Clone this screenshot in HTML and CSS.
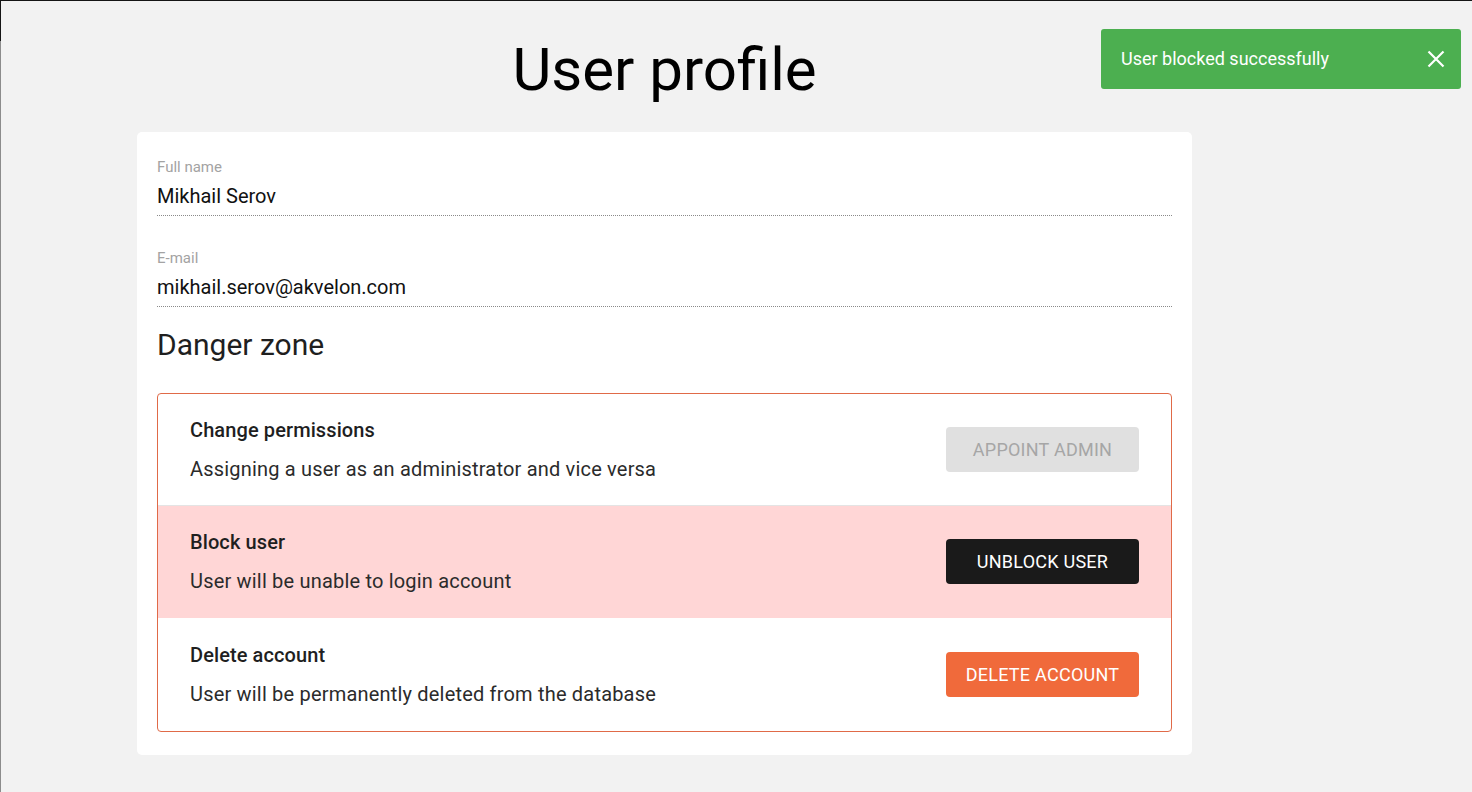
FILE: index.html
```html
<!DOCTYPE html>
<html lang="en">
<head>
<meta charset="utf-8">
<title>User profile</title>
<link rel="stylesheet" href="styles.css">
</head>
<body>
<div class="frame-top"></div>
<div class="frame-left"></div>

<main class="page">
  <h1 class="page-title">User profile</h1>

  <section class="card">
    <div class="field">
      <div class="field-label">Full name</div>
      <div class="field-value">Mikhail Serov</div>
    </div>
    <div class="field">
      <div class="field-label">E-mail</div>
      <div class="field-value">mikhail.serov@akvelon.com</div>
    </div>

    <h2 class="section-title">Danger zone</h2>

    <div class="danger-box">
      <div class="danger-row">
        <div class="danger-text">
          <div class="danger-title">Change permissions</div>
          <div class="danger-desc">Assigning a user as an administrator and vice versa</div>
        </div>
        <button class="btn btn-disabled" type="button">Appoint admin</button>
      </div>
      <div class="danger-row danger-row-active">
        <div class="danger-text">
          <div class="danger-title">Block user</div>
          <div class="danger-desc">User will be unable to login account</div>
        </div>
        <button class="btn btn-dark" type="button">Unblock user</button>
      </div>
      <div class="danger-row">
        <div class="danger-text">
          <div class="danger-title">Delete account</div>
          <div class="danger-desc">User will be permanently deleted from the database</div>
        </div>
        <button class="btn btn-danger" type="button">Delete account</button>
      </div>
    </div>
  </section>
</main>

<div class="toast">
  <span class="toast-text">User blocked successfully</span>
  <svg class="toast-close" width="18" height="18" viewBox="0 0 18 18" aria-hidden="true">
    <path d="M1.5 1.5 L16.5 16.5 M16.5 1.5 L1.5 16.5" stroke="#ffffff" stroke-width="2.2" fill="none"/>
  </svg>
</div>
</body>
</html>
```

FILE: styles.css
```css
html, body {
  margin: 0;
  padding: 0;
}

body {
  background: #f2f2f2;
  font-family: Roboto, "Liberation Sans", Arial, sans-serif;
  color: #1a1a1a;
  min-height: 792px;
}

.frame-top {
  position: fixed;
  left: 0;
  top: 0;
  width: 100%;
  height: 1px;
  background: #151515;
}

.frame-left {
  position: fixed;
  left: 0;
  top: 0;
  width: 1px;
  height: 100%;
  background: linear-gradient(to bottom, #151515 0, #151515 41px, #8c8c8c 41px, #8c8c8c 100%);
}

.page {
  width: 1055px;
  margin-left: 137px;
  padding-top: 34px;
}

.page-title {
  margin: 0 0 26px;
  font-size: 60px;
  line-height: 72px;
  font-weight: 400;
  text-align: center;
  color: #000;
}

.card {
  background: #ffffff;
  border-radius: 5px;
  padding: 26px 20px 23px;
}

.field {
  margin-bottom: 33px;
}

.field-label {
  font-size: 15px;
  line-height: 18px;
  color: #a3a3a3;
}

.field-value {
  margin-top: 8px;
  font-size: 20px;
  line-height: 24px;
  color: #111;
  padding-bottom: 7px;
  border-bottom: 1px dotted #8a8a8a;
}

.section-title {
  margin: -13px 0 30px;
  font-size: 30px;
  line-height: 36px;
  font-weight: 400;
  color: #1f1f1f;
}

.danger-box {
  border: 1px solid #e06a48;
  border-radius: 4px;
  overflow: hidden;
}

.danger-row {
  display: flex;
  align-items: center;
  justify-content: space-between;
  padding: 24px 32px 25px 32px;
  border-top: 1px solid #e4e4e4;
}

.danger-row:first-child {
  border-top: none;
  padding-bottom: 24px;
}

.danger-row-active {
  background: #ffd6d6;
}

.danger-row-active + .danger-row {
  border-top-color: #ffffff;
}

.danger-title {
  font-size: 20px;
  line-height: 24px;
  font-weight: 500;
  letter-spacing: 0.1px;
  color: #1f1f1f;
  margin-bottom: 15px;
}

.danger-desc {
  font-size: 20px;
  line-height: 24px;
  letter-spacing: 0.19px;
  color: #2b2b2b;
}

.btn {
  width: 193px;
  height: 45px;
  border: none;
  border-radius: 4px;
  font-family: Roboto, "Liberation Sans", Arial, sans-serif;
  font-size: 18px;
  font-weight: 400;
  letter-spacing: 0.25px;
  text-transform: uppercase;
  padding: 0;
  cursor: pointer;
}

.btn-disabled {
  background: #e0e0e0;
  color: #a6a6a6;
  cursor: default;
}

.btn-dark {
  background: #1a1a1a;
  color: #ffffff;
}

.btn-danger {
  background: #f06a3b;
  color: #ffffff;
}

.toast {
  position: absolute;
  top: 29px;
  right: 11px;
  width: 360px;
  height: 60px;
  box-sizing: border-box;
  padding: 0 16px 1px 20px;
  background: #4caf50;
  border-radius: 3px;
  display: flex;
  align-items: center;
  justify-content: space-between;
}

.toast-text {
  font-size: 18px;
  color: #ffffff;
}

.toast-close {
  display: block;
  width: 18px;
  height: 18px;
}
```
